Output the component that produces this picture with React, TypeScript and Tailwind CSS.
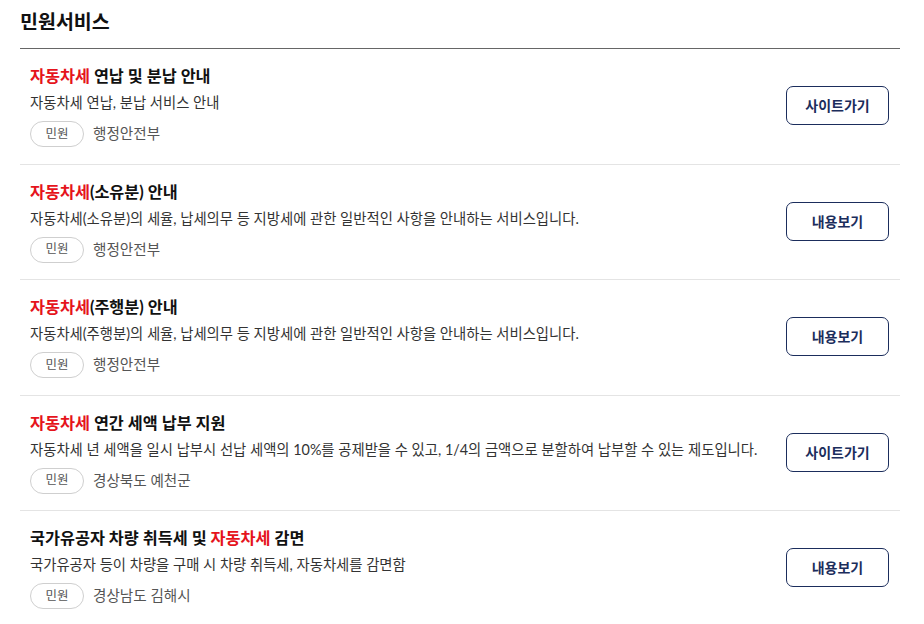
import React from "react";

type Item = {
  title: React.ReactNode;
  desc: string;
  org: string;
  action: string;
};

const Red = ({ children }: { children: React.ReactNode }) => (
  <span className="text-[#e5141c]">{children}</span>
);

const items: Item[] = [
  {
    title: (
      <>
        <Red>자동차세</Red> 연납 및 분납 안내
      </>
    ),
    desc: "자동차세 연납, 분납 서비스 안내",
    org: "행정안전부",
    action: "사이트가기",
  },
  {
    title: (
      <>
        <Red>자동차세</Red>(소유분) 안내
      </>
    ),
    desc: "자동차세(소유분)의 세율, 납세의무 등 지방세에 관한 일반적인 사항을 안내하는 서비스입니다.",
    org: "행정안전부",
    action: "내용보기",
  },
  {
    title: (
      <>
        <Red>자동차세</Red>(주행분) 안내
      </>
    ),
    desc: "자동차세(주행분)의 세율, 납세의무 등 지방세에 관한 일반적인 사항을 안내하는 서비스입니다.",
    org: "행정안전부",
    action: "내용보기",
  },
  {
    title: (
      <>
        <Red>자동차세</Red> 연간 세액 납부 지원
      </>
    ),
    desc: "자동차세 년 세액을 일시 납부시 선납 세액의 10%를 공제받을 수 있고, 1/4의 금액으로 분할하여 납부할 수 있는 제도입니다.",
    org: "경상북도 예천군",
    action: "사이트가기",
  },
  {
    title: (
      <>
        국가유공자 차량 취득세 및 <Red>자동차세</Red> 감면
      </>
    ),
    desc: "국가유공자 등이 차량을 구매 시 차량 취득세, 자동차세를 감면함",
    org: "경상남도 김해시",
    action: "내용보기",
  },
];

function ServiceRow({ item, last }: { item: Item; last: boolean }) {
  return (
    <li
      className={
        "flex items-center justify-between pl-[10px] pr-[11px] pt-[15px] pb-[16.5px]" +
        (last ? "" : " border-b border-[#e4e4e4]")
      }
    >
      <div className="min-w-0">
        <h3 className="text-[16.3px] font-bold leading-[24px] text-[#111]">{item.title}</h3>
        <p className="mt-[4px] text-[14.35px] leading-[22px] text-[#333]">{item.desc}</p>
        <div className="mt-[7px] flex items-center gap-[9px]">
          <span className="flex h-[26px] w-[54px] items-center justify-center rounded-full border border-[#cfcfcf] text-[12.5px] text-[#555]">
            민원
          </span>
          <span className="text-[14.6px] text-[#555]">{item.org}</span>
        </div>
      </div>
      <button className="flex h-[39px] w-[103px] shrink-0 items-center justify-center rounded-[7px] border border-[#1b2d5c] text-[14px] font-bold text-[#1b2d5c]">
        {item.action}
      </button>
    </li>
  );
}

export default function App() {
  return (
    <div
      className="min-h-[624px] w-[924px] bg-white px-[20px] pt-[7px]"
      style={{ fontFamily: 'Lato, "Noto Sans CJK KR", sans-serif' }}
    >
      <h2 className="pb-[11px] text-[19.5px] font-bold leading-[30px] text-[#111]">민원서비스</h2>
      <ul className="w-[880px] border-t border-[#666]">
        {items.map((item, i) => (
          <ServiceRow key={i} item={item} last={i === items.length - 1} />
        ))}
      </ul>
    </div>
  );
}
